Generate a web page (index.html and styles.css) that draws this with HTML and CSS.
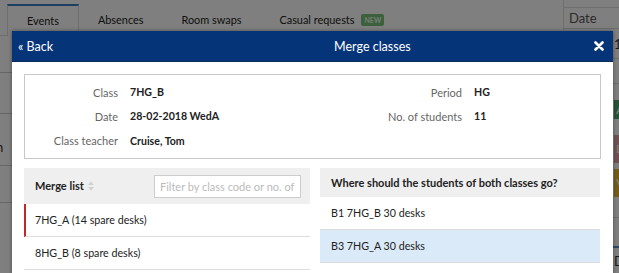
FILE: index.html
```html
<!DOCTYPE html>
<html>
<head>
<meta charset="utf-8">
<link rel="stylesheet" href="styles.css">
</head>
<body>
<div class="page">
  <div class="main">
    <div class="tabs">
      <div class="tab active">Events</div>
      <div class="tab">Absences</div>
      <div class="tab">Room swaps</div>
      <div class="tab">Casual requests <span class="badge">NEW</span></div>
    </div>
    <div class="list">
      <div class="list-row"></div>
      <div class="list-row tall"></div>
      <div class="list-row taller"><span class="cut">Reason</span></div>
      <div class="list-row"></div>
    </div>
  </div>
  <div class="side">
    <div class="side-head">Date</div>
    <div class="side-row">12:00</div>
    <div class="side-row short"></div>
    <div class="side-btns">
      <span class="sbtn green">Approve</span>
      <span class="sbtn red">Delete</span>
      <span class="sbtn yellow">View</span>
    </div>
    <div class="side-row grey"></div>
    <div class="side-row line">Details</div>
  </div>
</div>
<div class="overlay"></div>
<div class="modal">
  <div class="modal-head">
    <a class="back">&laquo; Back</a>
    <div class="title">Merge classes</div>
    <svg class="close" width="10" height="10" viewBox="0 0 10 10"><path d="M1.5 1.5 L8.5 8.5 M8.5 1.5 L1.5 8.5" stroke="#fff" stroke-width="2.6" stroke-linecap="round"/></svg>
  </div>
  <div class="modal-body">
    <div class="info">
      <div class="lbl">Class</div><div class="val">7HG_B</div>
      <div class="lbl">Period</div><div class="val">HG</div>
      <div class="lbl">Date</div><div class="val">28-02-2018 WedA</div>
      <div class="lbl">No. of students</div><div class="val">11</div>
      <div class="lbl">Class teacher</div><div class="val">Cruise, Tom</div>
      <div class="lbl"></div><div class="val"></div>
    </div>
    <div class="panels">
      <div class="panel left">
        <div class="panel-head tall">
          <span class="ph-title">Merge list</span>
          <svg class="sort" width="6" height="10" viewBox="0 0 6 10"><path d="M0 4 L3 0.5 L6 4 Z M0 6 L3 9.5 L6 6 Z" fill="#d0d0d0"/></svg>
          <input class="filter" type="text" placeholder="Filter by class code or no. of desks">
        </div>
        <div class="row selected-red">7HG_A (14 spare desks)</div>
        <div class="row">8HG_B (8 spare desks)</div>
      </div>
      <div class="panel right">
        <div class="panel-head">
          <span class="ph-title">Where should the students of both classes go?</span>
        </div>
        <div class="row">B1 7HG_B 30 desks</div>
        <div class="row hl">B3 7HG_A 30 desks</div>
      </div>
    </div>
  </div>
</div>
</body>
</html>
```
FILE: styles.css
```css
* { box-sizing: border-box; }
html, body { margin: 0; padding: 0; }
body {
  width: 619px;
  height: 273px;
  overflow: hidden;
  background: #fff;
  font-family: Lato, "Open Sans", sans-serif;
  color: #333;
  position: relative;
}
.page {
  display: flex;
  height: 273px;
}
.main {
  flex: 1;
  padding-top: 4px;
}
.tabs {
  display: flex;
  align-items: stretch;
  height: 32px;
  padding-left: 7px;
  border-bottom: 1px solid #ddd;
  font-size: 10.9px;
}
.tab {
  padding: 0 19px;
  display: flex;
  align-items: center;
  color: #222;
  white-space: nowrap;
}
.tab.active {
  border-top: 2px solid #3a7fc4;
  border-left: 1px solid #ddd;
  border-right: 1px solid #ddd;
  background: #fff;
  padding-bottom: 2px;
  margin-bottom: -1px;
}
.badge {
  margin-left: 7px;
  background: #78c078;
  color: #e8ffe8;
  font-size: 7px;
  font-weight: bold;
  padding: 2px 3px;
  border-radius: 2px;
}
.list { font-size: 13px; }
.list-row {
  height: 37px;
  border-bottom: 1px solid #ccc;
}
.list-row.tall { height: 41px; }
.list-row.taller {
  height: 52px;
  display: flex;
  align-items: center;
  padding-top: 14px;
  overflow: hidden;
}
.cut { margin-left: -38px; white-space: nowrap; }
.side {
  width: 56px;
  border-left: 1px solid #ddd;
  font-size: 13px;
  padding-top: 7px;
  overflow: hidden;
}
.side-head {
  height: 22px;
  border-top: 1px solid #ddd;
  border-bottom: 1px solid #ddd;
  padding-left: 5px;
  line-height: 21px;
  color: #555;
}
.side-row {
  height: 30px;
  padding-left: 50px;
  line-height: 30px;
  border-bottom: 1px solid #ddd;
  white-space: nowrap;
}
.side-row.short { height: 25px; }
.side-btns {
  display: flex;
  flex-direction: column;
  gap: 6px;
  padding: 16px 0 0 50px;
}
.sbtn {
  display: block;
  height: 28px;
  width: 60px;
  font-size: 12px;
  color: #fff;
  line-height: 28px;
  padding-left: 2px;
}
.sbtn.green { background: #4aa96c; height: 19px; line-height: 19px; }
.sbtn.red { background: #e0a0a0; margin-top: 10px; }
.sbtn.yellow { background: #e8b830; }
.side-row.grey { height: 21px; }
.side-row.line { border-top: 2px solid #5a90d0; border-bottom: none; line-height: 26px; margin-top: 28px; }

.overlay {
  position: absolute;
  inset: 0;
  background: rgba(0, 0, 0, 0.5);
}
.modal {
  position: absolute;
  left: 12px;
  top: 31px;
  width: 601px;
  height: 260px;
  background: #fff;
  box-shadow: 0 0 4px rgba(0,0,0,0.4);
}
.modal-head {
  height: 31px;
  background: #063479;
  color: #fff;
  display: flex;
  align-items: center;
  padding: 0 7px 0 6px;
  font-size: 12.5px;
  border-bottom: 1px solid #0a2a5c;
}
.back { color: #fff; }
.title { margin-left: 281px; flex: 1; }
.close { display: block; margin-right: 2px; }
.modal-body {
  padding: 12px;
}
.info {
  border: 1px solid #c8c8c8;
  display: grid;
  grid-template-columns: 93px 188px 132px 1fr;
  column-gap: 12px;
  padding: 5px 0 5px 0;
  font-size: 11px;
}
.info > div {
  height: 24.3px;
  display: flex;
  align-items: center;
}
.lbl {
  justify-content: flex-end;
  color: #666;
}
.val {
  font-weight: bold;
  color: #222;
  font-size: 10.6px;
}
.panels {
  display: flex;
  gap: 10px;
  margin-top: 9px;
  align-items: flex-start;
}
.panel.left { width: 286px; }
.panel.right { width: 280px; }
.panel-head {
  background: #efefef;
  height: 29px;
  display: flex;
  align-items: center;
  padding: 0 9px 0 11px;
  font-size: 11px;
  font-weight: bold;
  color: #222;
}
.panel-head.tall { height: 36px; }
.sort { margin-left: 4px; margin-right: auto; }
.filter {
  width: 147px;
  height: 23px;
  border: 1px solid #ccc;
  background: #fff;
  font-family: Lato, sans-serif;
  font-size: 11px;
  padding: 0 5px;
  margin-top: 1px;
  outline: none;
}
.filter::placeholder { color: #bbb; }
.row {
  height: 33px;
  border-bottom: 1px solid #ddd;
  display: flex;
  align-items: center;
  padding-left: 11px;
  font-size: 10.7px;
  color: #222;
}
.row.selected-red { border-left: 2px solid #c0282d; padding-left: 9px; }
.row.hl { background: #dbeaf8; }
```
